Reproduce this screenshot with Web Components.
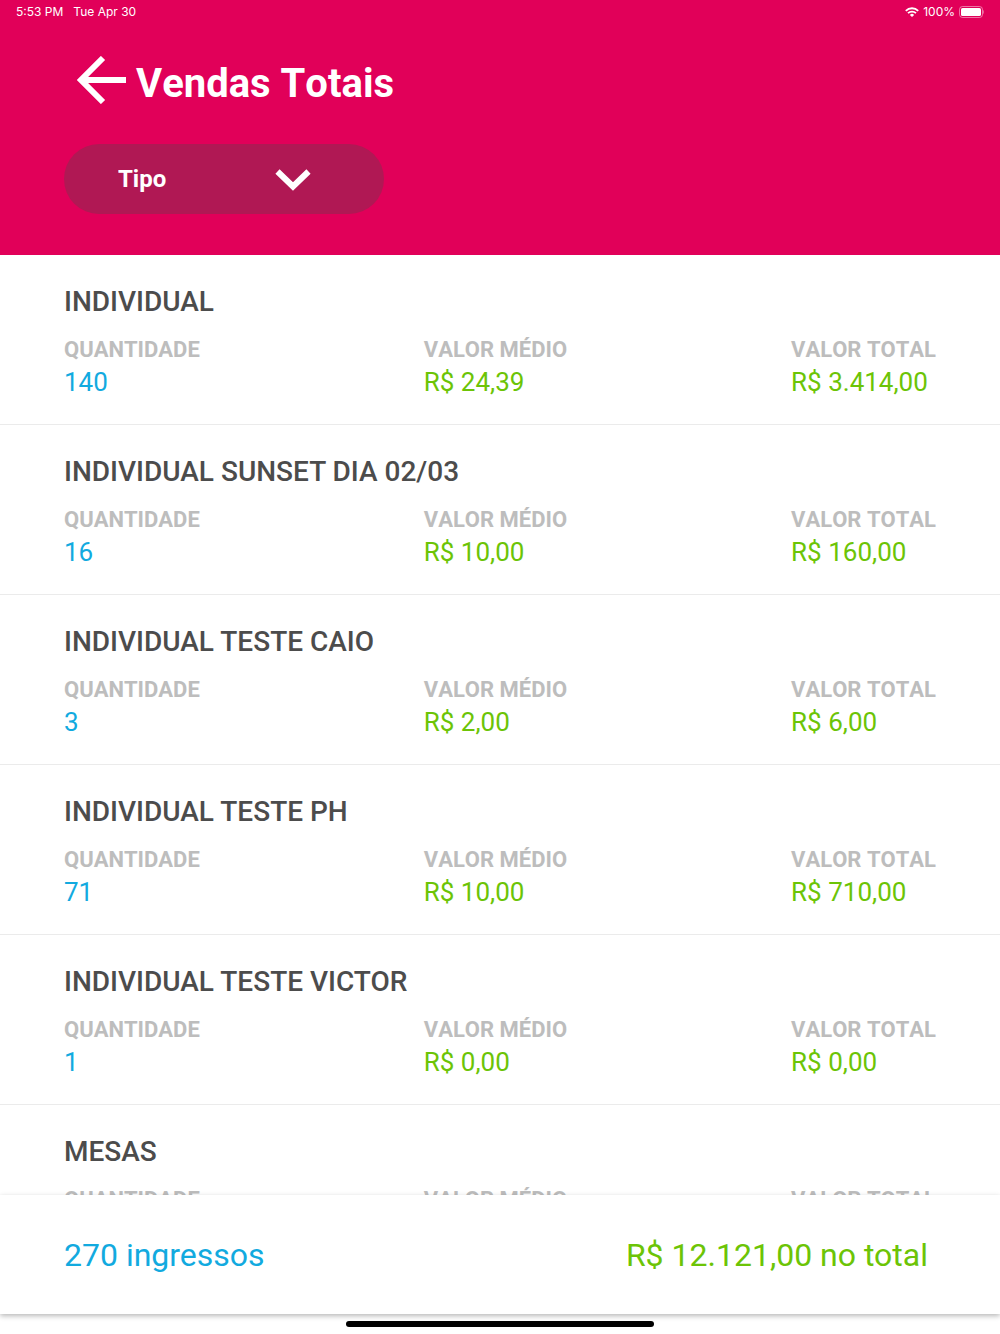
<!DOCTYPE html>
<html lang="pt-BR">
<head>
<meta charset="utf-8">
<meta name="viewport" content="width=device-width, initial-scale=1">
<title>Vendas Totais</title>
<style>
  :root {
    --brand: #e10059;
    --brand-dark: #b01854;
    --blue: #12aadf;
    --green: #6cc406;
    --ink: #4c4c4c;
    --muted: #bdbdbd;
    --line: #ebebeb;
    --gutter: 64px;
  }
  html, body { height: 100%; margin: 0; background: #fff; font-family: Roboto, sans-serif; }
</style>
</head>
<body>
<sales-app></sales-app>

<script>
  function define(name, html, setup) {
    const template = document.createElement('template');
    template.innerHTML = html;
    customElements.define(name, class extends HTMLElement {
      constructor() {
        super();
        this.attachShadow({ mode: 'open' }).append(template.content.cloneNode(true));
      }
      connectedCallback() {
        if (setup) setup(this, this.shadowRoot);
      }
    });
  }

  define('status-bar', `
    <style>
      :host { display: flex; justify-content: space-between; align-items: center; height: 24px; padding: 0 16px;
              color: #fff; font: 400 12px/24px Inter, sans-serif; }
      div { display: flex; align-items: center; }
      .time { gap: 10px; }
      .power { gap: 4px; }
      svg { display: block; }
    </style>
    <div class="time"><span>5:53 PM</span><span>Tue Apr 30</span></div>
    <div class="power">
      <svg width="14" height="10" viewBox="0 0 14 10" fill="none" stroke="#fff" stroke-width="1.8" aria-hidden="true">
        <path d="M.8 3.8a8.8 8.8 0 0 1 12.4 0M3 6.2a5.7 5.7 0 0 1 8 0"/>
        <path d="M7 9.9 4.9 7.9a3 3 0 0 1 4.2 0z" fill="#fff" stroke="none"/>
      </svg>
      <span>100%</span>
      <svg width="25" height="12" viewBox="0 0 25 12" aria-hidden="true">
        <rect x=".5" y=".5" width="23" height="11" rx="3" fill="none" stroke="#fff" stroke-opacity=".45"/>
        <rect x="2" y="2" width="20" height="8" rx="1.6" fill="#fff"/>
        <path d="M24.2 4v4c1-.6 1-3.4 0-4z" fill="#fff" fill-opacity=".5"/>
      </svg>
    </div>`);

  define('type-filter', `
    <style>
      :host { display: grid; width: 320px; height: 70px; }
      select, svg { grid-area: 1 / 1; }
      select { appearance: none; border: 0; border-radius: 35px; margin: 0; padding: 0 54px; background: var(--brand-dark);
               color: #fff; font: 700 24px/32px Roboto, sans-serif; cursor: pointer; }
      svg { place-self: center end; margin-right: 73px; pointer-events: none; }
    </style>
    <select aria-label="Tipo"><option>Tipo</option></select>
    <svg width="36" height="24" viewBox="0 0 36 24" fill="none" stroke="#fff" stroke-width="6" aria-hidden="true">
      <path d="M2.5 4.5 18 19.5 33.5 4.5"/>
    </svg>`);

  define('page-header', `
    <style>
      :host { display: block; flex: none; background: var(--brand); color: #fff; }
      .content { padding: 32px var(--gutter) 41px; }
      .heading { display: flex; align-items: center; gap: 10px; padding: 0 12px; margin-bottom: 40px; }
      button { border: 0; padding: 0; background: none; color: inherit; cursor: pointer; }
      svg { display: block; }
      h1 { margin: 0; padding-top: 8px; font-size: 40px; line-height: 40px; font-weight: 700; font-kerning: none; }
    </style>
    <status-bar></status-bar>
    <div class="content">
      <div class="heading">
        <button aria-label="Voltar">
          <svg width="50" height="48" viewBox="0 0 50 48" fill="none" stroke="currentColor" stroke-width="6">
            <path d="M27 2 5 24 27 46M5 24H50"/>
          </svg>
        </button>
        <h1><slot></slot></h1>
      </div>
      <type-filter></type-filter>
    </div>`);

  define('sales-row', `
    <style>
      :host { display: block; padding: 31px var(--gutter) 26px; border-bottom: 1px solid var(--line); }
      h2 { margin: 0 0 16px; color: var(--ink); font-size: 28px; line-height: 32px; font-weight: 500; }
      dl { display: flex; justify-content: space-between; margin: 0; }
      dt { color: var(--muted); font-size: 22px; line-height: 32px; font-weight: 700; font-kerning: none; }
      dd { margin: 0; color: var(--green); font-size: 26px; line-height: 32px; }
      .count { color: var(--blue); }
    </style>
    <h2><slot></slot></h2>
    <dl>
      <div><dt>QUANTIDADE</dt><dd class="count"></dd></div>
      <div><dt>VALOR MÉDIO</dt><dd class="average"></dd></div>
      <div><dt>VALOR TOTAL</dt><dd class="total"></dd></div>
    </dl>`, (host, root) => {
      for (const key of ['count', 'average', 'total']) {
        root.querySelector('.' + key).textContent = host.getAttribute(key);
      }
    });

  define('sales-summary', `
    <style>
      :host { display: flex; flex: none; align-items: center; justify-content: space-between; min-height: 119px;
              padding: 0 72px 0 var(--gutter); background: #fff; position: relative; font-size: 32px; line-height: 40px;
              box-shadow: 0 2px 5px rgba(0, 0, 0, .28); }
      .tickets { color: var(--blue); }
      .total { color: var(--green); }
    </style>
    <span class="tickets"><slot name="tickets"></slot></span>
    <span class="total"><slot name="total"></slot></span>`);

  define('home-indicator', `
    <style>
      :host { display: flex; flex: none; justify-content: center; align-items: center; height: 20px; }
      i { width: 308px; height: 6px; border-radius: 3px; background: #000; }
    </style>
    <i></i>`);

  define('sales-app', `
    <style>
      :host { display: flex; flex-direction: column; height: 100vh; }
      main { flex: 1; min-height: 0; overflow-y: auto; scrollbar-width: none; }
    </style>
    <page-header>Vendas Totais</page-header>
    <main>
      <sales-row count="140" average="R$ 24,39" total="R$ 3.414,00">INDIVIDUAL</sales-row>
      <sales-row count="16" average="R$ 10,00" total="R$ 160,00">INDIVIDUAL SUNSET DIA 02/03</sales-row>
      <sales-row count="3" average="R$ 2,00" total="R$ 6,00">INDIVIDUAL TESTE CAIO</sales-row>
      <sales-row count="71" average="R$ 10,00" total="R$ 710,00">INDIVIDUAL TESTE PH</sales-row>
      <sales-row count="1" average="R$ 0,00" total="R$ 0,00">INDIVIDUAL TESTE VICTOR</sales-row>
      <sales-row>MESAS</sales-row>
    </main>
    <sales-summary>
      <span slot="tickets">270 ingressos</span>
      <span slot="total">R$ 12.121,00 no total</span>
    </sales-summary>
    <home-indicator></home-indicator>`);
</script>
</body>
</html>
